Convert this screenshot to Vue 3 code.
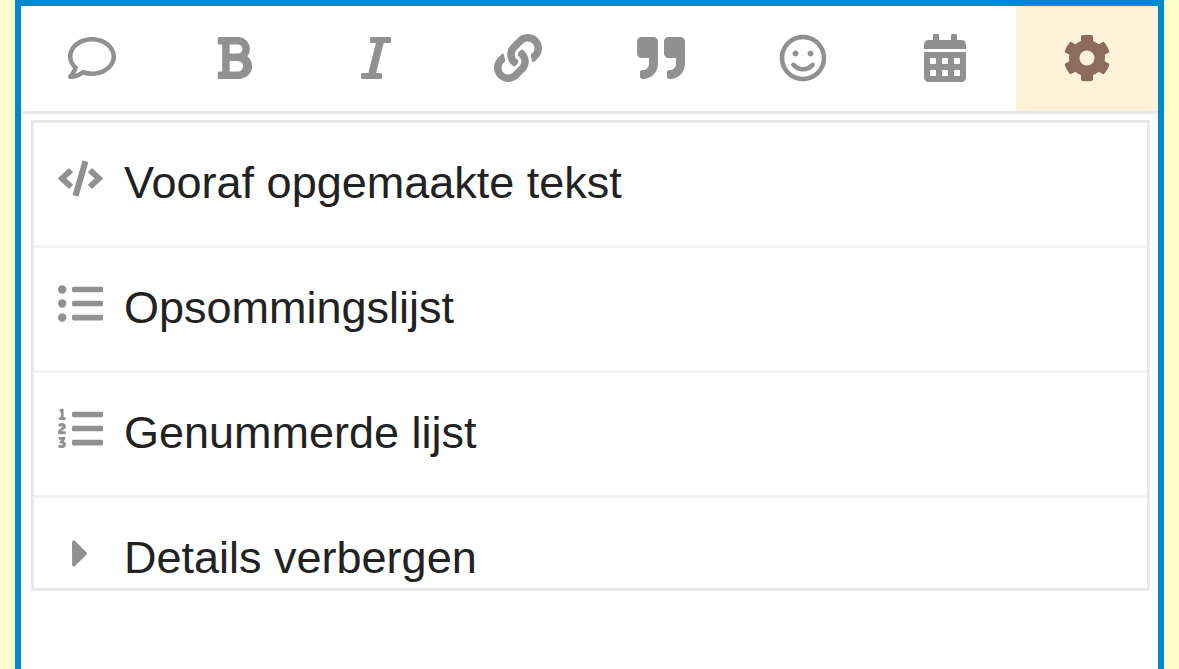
<script setup>
import { ref } from 'vue'

const tools = [
  {
    id: 'quote-post', label: 'Bericht citeren', box: '0 0 512 512',
    path: 'M256 32C114.6 32 0 125.1 0 240c0 47.6 19.9 91.2 52.9 126.3C38 405.7 7 439.1 6.5 439.5c-6.6 7-8.4 17.2-4.6 26S14.4 480 24 480c61.5 0 110-25.7 139.1-46.3C192 442.8 223.2 448 256 448c141.4 0 256-93.1 256-208S397.4 32 256 32zm0 368c-26.7 0-53.1-4.1-78.4-12.1l-22.7-7.2-19.5 13.8c-14.3 10.1-33.9 21.4-57.5 29 7.3-12.1 14.4-25.7 19.9-40.2l10.6-28.1-20.6-21.8C69.7 314.1 48 282.2 48 240c0-88.2 93.3-160 208-160s208 71.8 208 160-93.3 160-208 160z'
  },
  {
    id: 'bold', label: 'Vet', box: '0 0 384 512',
    path: 'M333.49 238a122 122 0 0 0 27-65.21C367.87 96.49 308 32 233.42 32H34a16 16 0 0 0-16 16v48a16 16 0 0 0 16 16h31.87v288H34a16 16 0 0 0-16 16v48a16 16 0 0 0 16 16h209.32c70.8 0 134.14-51.75 141-122.4 4.74-48.45-16.39-92.06-50.83-119.6zM145.66 112h87.76a48 48 0 0 1 0 96h-87.76zm87.76 288h-87.76V288h87.76a56 56 0 0 1 0 112z'
  },
  {
    id: 'italic', label: 'Cursief', box: '0 0 320 512',
    path: 'M320 48v32a16 16 0 0 1-16 16h-62.76l-80 320H208a16 16 0 0 1 16 16v32a16 16 0 0 1-16 16H16a16 16 0 0 1-16-16v-32a16 16 0 0 1 16-16h62.76l80-320H112a16 16 0 0 1-16-16V48a16 16 0 0 1 16-16h192a16 16 0 0 1 16 16z'
  },
  {
    id: 'link', label: 'Koppeling', box: '0 0 512 512',
    path: 'M326.612 185.391c59.747 59.809 58.927 155.698.36 214.59-.11.12-.24.25-.36.37l-67.2 67.2c-59.27 59.27-155.699 59.262-214.96 0-59.27-59.26-59.27-155.7 0-214.96l37.106-37.106c9.84-9.84 26.786-3.3 27.294 10.606.648 17.722 3.826 35.527 9.69 52.721 1.986 5.822.567 12.262-3.783 16.612l-13.087 13.087c-28.026 28.026-28.905 73.66-1.155 101.96 28.024 28.579 74.086 28.749 102.325.51l67.2-67.19c28.191-28.191 28.073-73.757 0-101.83-3.701-3.694-7.429-6.564-10.341-8.569a16.037 16.037 0 0 1-6.947-12.606c-.396-10.567 3.348-21.456 11.698-29.806l21.054-21.055c5.521-5.521 14.182-6.199 20.584-1.731a152.482 152.482 0 0 1 20.522 17.197zM467.547 44.449c-59.261-59.262-155.69-59.27-214.96 0l-67.2 67.2c-.12.12-.25.25-.36.37-58.566 58.892-59.387 154.781.36 214.59a152.454 152.454 0 0 0 20.521 17.196c6.402 4.468 15.064 3.789 20.584-1.731l21.054-21.055c8.35-8.35 12.094-19.239 11.698-29.806a16.037 16.037 0 0 0-6.947-12.606c-2.912-2.005-6.64-4.875-10.341-8.569-28.073-28.073-28.191-73.639 0-101.83l67.2-67.19c28.239-28.239 74.3-28.069 102.325.51 27.75 28.3 26.872 73.934-1.155 101.96l-13.087 13.087c-4.35 4.35-5.769 10.79-3.783 16.612 5.864 17.194 9.042 34.999 9.69 52.721.509 13.906 17.454 20.446 27.294 10.606l37.106-37.106c59.271-59.259 59.271-155.699.001-214.959z'
  },
  {
    id: 'blockquote', label: 'Citaat', box: '0 0 512 512',
    path: 'M464 32H336c-26.5 0-48 21.5-48 48v128c0 26.5 21.5 48 48 48h80v64c0 35.3-28.7 64-64 64h-8c-13.3 0-24 10.7-24 24v48c0 13.3 10.7 24 24 24h8c88.4 0 160-71.6 160-160V80c0-26.5-21.5-48-48-48zm-288 0H48C21.5 32 0 53.5 0 80v128c0 26.5 21.5 48 48 48h80v64c0 35.3-28.7 64-64 64h-8c-13.3 0-24 10.7-24 24v48c0 13.3 10.7 24 24 24h8c88.4 0 160-71.6 160-160V80c0-26.5-21.5-48-48-48z'
  },
  {
    id: 'emoji', label: 'Emoji', box: '0 0 496 512',
    path: 'M248 8C111 8 0 119 0 256s111 248 248 248 248-111 248-248S385 8 248 8zm0 448c-110.3 0-200-89.7-200-200S137.7 56 248 56s200 89.7 200 200-89.7 200-200 200zm-80-216c17.7 0 32-14.3 32-32s-14.3-32-32-32-32 14.3-32 32 14.3 32 32 32zm160 0c17.7 0 32-14.3 32-32s-14.3-32-32-32-32 14.3-32 32 14.3 32 32 32zm4 72.6c-20.8 25-51.5 39.4-84 39.4s-63.2-14.3-84-39.4c-8.5-10.2-23.7-11.5-33.8-3.1-10.2 8.5-11.5 23.6-3.1 33.8 30 36 74.1 56.6 120.9 56.6s90.9-20.6 120.9-56.6c8.5-10.2 7.1-25.3-3.1-33.8-10.1-8.4-25.3-7.1-33.8 3.1z'
  },
  {
    id: 'date', label: 'Datum', box: '0 0 448 512',
    path: 'M0 464c0 26.5 21.5 48 48 48h352c26.5 0 48-21.5 48-48V192H0v272zm320-196c0-6.6 5.4-12 12-12h40c6.6 0 12 5.4 12 12v40c0 6.6-5.4 12-12 12h-40c-6.6 0-12-5.4-12-12v-40zm0 128c0-6.6 5.4-12 12-12h40c6.6 0 12 5.4 12 12v40c0 6.6-5.4 12-12 12h-40c-6.6 0-12-5.4-12-12v-40zM192 268c0-6.6 5.4-12 12-12h40c6.6 0 12 5.4 12 12v40c0 6.6-5.4 12-12 12h-40c-6.6 0-12-5.4-12-12v-40zm0 128c0-6.6 5.4-12 12-12h40c6.6 0 12 5.4 12 12v40c0 6.6-5.4 12-12 12h-40c-6.6 0-12-5.4-12-12v-40zM64 268c0-6.6 5.4-12 12-12h40c6.6 0 12 5.4 12 12v40c0 6.6-5.4 12-12 12H76c-6.6 0-12-5.4-12-12v-40zm0 128c0-6.6 5.4-12 12-12h40c6.6 0 12 5.4 12 12v40c0 6.6-5.4 12-12 12H76c-6.6 0-12-5.4-12-12v-40zM400 64h-48V16c0-8.8-7.2-16-16-16h-32c-8.8 0-16 7.2-16 16v48H160V16c0-8.8-7.2-16-16-16h-32c-8.8 0-16 7.2-16 16v48H48C21.5 64 0 85.5 0 112v48h448v-48c0-26.5-21.5-48-48-48z'
  },
  {
    id: 'options', label: 'Opties', box: '0 0 512 512',
    path: 'M487.4 315.7l-42.6-24.6c4.3-23.2 4.3-47 0-70.2l42.6-24.6c4.9-2.8 7.1-8.6 5.5-14-11.1-35.6-30-67.8-54.7-94.6-3.8-4.1-10-5.1-14.8-2.3L380.8 110c-17.9-15.4-38.5-27.3-60.8-35.1V25.8c0-5.6-3.9-10.5-9.4-11.7-36.7-8.2-74.3-7.8-109.2 0-5.5 1.2-9.4 6.1-9.4 11.7V75c-22.2 7.9-42.8 19.8-60.8 35.1L88.7 85.5c-4.9-2.8-11-1.9-14.8 2.3-24.7 26.7-43.6 58.9-54.7 94.6-1.7 5.4.6 11.2 5.5 14L67.3 221c-4.3 23.2-4.3 47 0 70.2l-42.6 24.6c-4.9 2.8-7.1 8.6-5.5 14 11.1 35.6 30 67.8 54.7 94.6 3.8 4.1 10 5.1 14.8 2.3l42.6-24.6c17.9 15.4 38.5 27.3 60.8 35.1v49.2c0 5.6 3.9 10.5 9.4 11.7 36.7 8.2 74.3 7.8 109.2 0 5.5-1.2 9.4-6.1 9.4-11.7v-49.2c22.2-7.9 42.8-19.8 60.8-35.1l42.6 24.6c4.9 2.8 11 1.9 14.8-2.3 24.7-26.7 43.6-58.9 54.7-94.6 1.5-5.5-.7-11.3-5.6-14.1zM256 336c-44.1 0-80-35.9-80-80s35.9-80 80-80 80 35.9 80 80-35.9 80-80 80z'
  }
]

const listBars = 'M496 384H176a16 16 0 0 0-16 16v32a16 16 0 0 0 16 16h320a16 16 0 0 0 16-16v-32a16 16 0 0 0-16-16zm0-320H176a16 16 0 0 0-16 16v32a16 16 0 0 0 16 16h320a16 16 0 0 0 16-16V80a16 16 0 0 0-16-16zm0 160H176a16 16 0 0 0-16 16v32a16 16 0 0 0 16 16h320a16 16 0 0 0 16-16v-32a16 16 0 0 0-16-16z'

const options = [
  {
    id: 'code', label: 'Vooraf opgemaakte tekst', box: '0 0 640 512',
    path: 'M278.9 511.5l-61-17.7c-6.4-1.8-10-8.5-8.2-14.9L346.2 8.7c1.8-6.4 8.5-10 14.9-8.2l61 17.7c6.4 1.8 10 8.5 8.2 14.9L293.8 503.3c-1.9 6.4-8.5 10.1-14.9 8.2zm-114-112.2l43.5-46.4c4.6-4.9 4.3-12.7-.8-17.2L117 256l90.6-79.7c5.1-4.5 5.5-12.3.8-17.2l-43.5-46.4c-4.5-4.8-12.1-5.1-17-.5L3.8 247.2c-5.1 4.7-5.1 12.8 0 17.5l144.1 135.1c4.9 4.6 12.5 4.4 17-.5zm327.2.6l144.1-135.1c5.1-4.7 5.1-12.8 0-17.5L492.1 112.1c-4.8-4.5-12.4-4.3-17 .5L431.6 159c-4.6 4.9-4.3 12.7.8 17.2L523 256l-90.6 79.7c-5.1 4.5-5.5 12.3-.8 17.2l43.5 46.4c4.5 4.9 12.1 5.1 17 .6z'
  },
  {
    id: 'bullets', label: 'Opsommingslijst', box: '0 0 512 512',
    path: 'M48 48a48 48 0 1 0 48 48 48 48 0 0 0-48-48zm0 160a48 48 0 1 0 48 48 48 48 0 0 0-48-48zm0 160a48 48 0 1 0 48 48 48 48 0 0 0-48-48z' + listBars
  },
  {
    id: 'numbers', label: 'Genummerde lijst', box: '0 0 512 512',
    path: 'M61.77 401l17.5-20.15a19.92 19.92 0 0 0 5.07-14.19v-3.31C84.34 356 80.5 352 73 352H16a8 8 0 0 0-8 8v16a8 8 0 0 0 8 8h22.83a157.41 157.41 0 0 0-11 12.31l-5.61 7c-4 5.07-5.25 10.13-2.8 14.88l1.05 1.93c3 5.76 6.29 7.88 12.25 7.88h4.73c10.33 0 15.94 2.44 15.94 9.09 0 4.72-4.2 8.22-14.36 8.22a41.54 41.54 0 0 1-15.47-3.12c-6.49-3.88-11.74-3.5-15.6 3.12l-5.59 9.31c-3.72 6.13-3.19 11.72 2.63 15.94 7.71 4.69 20.38 9.44 37 9.44 34.16 0 48.5-22.75 48.5-44.12-.03-14.38-9.12-29.76-28.73-34.88zM16 160h64a8 8 0 0 0 8-8v-16a8 8 0 0 0-8-8H64V40a8 8 0 0 0-8-8H32a8 8 0 0 0-7.14 4.42l-8 16A8 8 0 0 0 24 64h8v64H16a8 8 0 0 0-8 8v16a8 8 0 0 0 8 8zm-3.91 160H80a8 8 0 0 0 8-8v-16a8 8 0 0 0-8-8H41.32c3.29-10.29 48.34-18.68 48.34-56.44 0-29.06-25-39.56-44.47-39.56-21.36 0-33.8 10-40.46 18.75-4.37 5.59-3 10.84 2.8 15.37l8.58 6.88c5.61 4.56 11 2.47 16.12-2.44a13.44 13.44 0 0 1 9.46-3.84c3.33 0 9.28 1.56 9.28 8.75C51 248.19 0 257.31 0 304.59v4C0 316 5.08 320 12.09 320z' + listBars
  },
  {
    id: 'details', label: 'Details verbergen', box: '0 0 192 512',
    path: 'M0 384.662V127.338c0-17.818 21.543-26.741 34.142-14.142l128.662 128.662c7.81 7.81 7.81 20.474 0 28.284L34.142 398.804C21.543 411.404 0 402.48 0 384.662z'
  }
]

const active = ref('options')

function toggle(id) {
  active.value = active.value === id ? '' : id
}
</script>

<template>
  <main class="page">
    <section class="editor">
      <div class="toolbar" role="toolbar" aria-label="Opmaak">
        <button
          v-for="tool in tools"
          :key="tool.id"
          type="button"
          class="tool"
          :class="{ active: active === tool.id }"
          :aria-label="tool.label"
          :aria-pressed="active === tool.id"
          @click="toggle(tool.id)"
        >
          <svg class="tool-icon" :viewBox="tool.box" aria-hidden="true"><path :d="tool.path" /></svg>
        </button>
      </div>
      <ul v-if="active === 'options'" class="menu">
        <li v-for="option in options" :key="option.id" class="menu-row">
          <button type="button" class="option">
            <svg class="option-icon" :viewBox="option.box" aria-hidden="true"><path :d="option.path" /></svg>
            <span>{{ option.label }}</span>
          </button>
        </li>
      </ul>
    </section>
  </main>
</template>

<style>
body {
  margin: 0;
  background: #ffffcc;
}
</style>

<style scoped>
.page {
  box-sizing: border-box;
  display: flex;
  min-height: 100vh;
  padding: 0 15px;
  font-family: "Liberation Sans", Arial, Helvetica, sans-serif;
  color: #222222;
}

.editor {
  flex: 1;
  min-width: 0;
  background: #ffffff;
  border: 6px solid #0088cc;
  border-bottom: 0;
}

.toolbar {
  display: flex;
  border-bottom: 3px solid #e9e9e9;
}

.tool {
  flex: 1;
  display: flex;
  justify-content: center;
  padding: 28px 0 29px;
  border: 0;
  background: transparent;
  color: #919191;
  cursor: pointer;
}

.tool.active {
  background: #fef2d9;
  color: #8c6c5a;
}

.tool-icon {
  width: 48px;
  height: 48px;
  fill: currentColor;
}

.menu {
  box-sizing: border-box;
  max-height: 471px;
  margin: 6px 8px 0 10px;
  padding: 0;
  overflow: hidden;
  border: 3px solid #e9e9e9;
  list-style: none;
}

.menu-row {
  border-bottom: 3px solid #f4f4f4;
}

.option {
  display: flex;
  align-items: flex-start;
  gap: 21px;
  width: 100%;
  padding: 33px 24px 35px;
  border: 0;
  background: transparent;
  color: inherit;
  font-family: inherit;
  font-size: 45px;
  line-height: 54px;
  text-align: left;
  cursor: pointer;
}

.option-icon {
  flex: none;
  width: 45px;
  height: 45px;
  fill: #919191;
}
</style>
